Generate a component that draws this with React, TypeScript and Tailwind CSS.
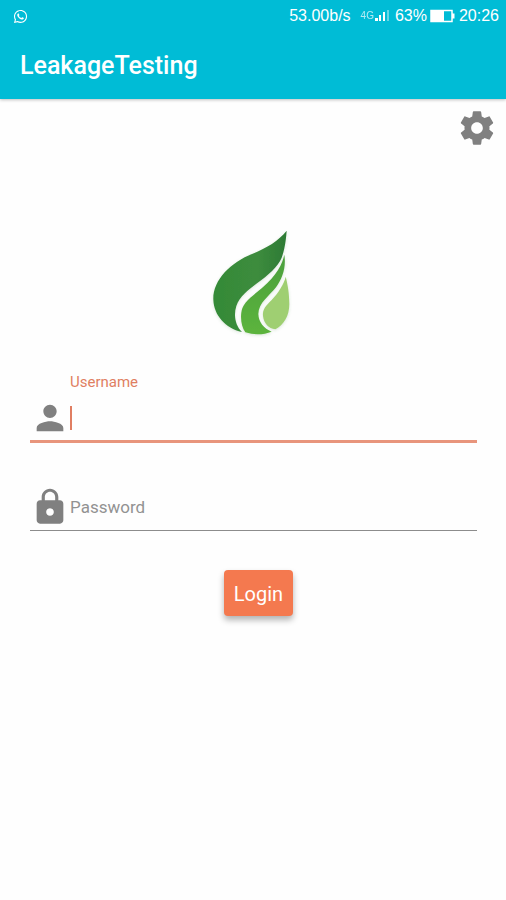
import { FaWhatsapp } from "react-icons/fa";

function StatusBar() {
  return (
    <div className="flex h-8 items-center justify-between pl-[13px] pr-[7px]">
      <FaWhatsapp className="size-[15px]" />
      <div className="flex items-center font-['Liberation_Sans',sans-serif] text-[16px] leading-5">
        <span>53.00b/s</span>
        <span className="ml-[10px] text-[10px] leading-5 opacity-70">4G</span>
        <svg viewBox="0 0 16 12" className="h-3 w-4" fill="currentColor" aria-hidden="true">
          <rect x="1" y="8" width="3" height="3" />
          <rect x="5" y="5" width="2" height="6" />
          <rect x="9" y="2" width="2" height="9" />
          <rect x="13" y="0" width="2" height="11" opacity="0.4" />
        </svg>
        <span className="ml-[5px]">63%</span>
        <svg viewBox="0 0 26 14" className="ml-[3px] h-[14px] w-[26px]" aria-hidden="true">
          <rect x="1" y="1.5" width="21" height="11" fill="none" stroke="currentColor" strokeWidth="1.5" />
          <rect x="1" y="1.5" width="13" height="11" fill="currentColor" />
          <rect x="22" y="4.5" width="2.5" height="5" fill="currentColor" />
        </svg>
        <span className="ml-[3px]">20:26</span>
      </div>
    </div>
  );
}

function LeafLogo() {
  return (
    <svg viewBox="0 0 360 390" className="h-[130px] w-[120px]" role="img" aria-label="Leaf">
      <defs>
        <linearGradient id="dark" x1="0" y1="0" x2="1" y2="0">
          <stop offset="0" stopColor="#348a37" />
          <stop offset="0.6" stopColor="#3d8c3d" />
          <stop offset="1" stopColor="#2d7a35" />
        </linearGradient>
        <linearGradient id="mid" x1="0" y1="0" x2="0" y2="1">
          <stop offset="0" stopColor="#4b9f3c" />
          <stop offset="1" stopColor="#5cb43c" />
        </linearGradient>
        <filter id="soft" x="-20%" y="-20%" width="140%" height="140%">
          <feDropShadow dx="0" dy="3" stdDeviation="5" floodColor="#3f7f3f" floodOpacity="0.2" />
        </filter>
      </defs>
      <g filter="url(#soft)">
        <path
          fill="url(#dark)"
          d="M275 32C250 63 216 83 173 101C106 127 53 181 55 239C57 286 91 324 141 336C121 318 115 285 124 258C134 230 160 209 186 190C220 165 248 141 260 113C268 93 273 60 275 32Z"
        />
        <path
          fill="url(#mid)"
          d="M268 104C262 132 246 165 201 204C177 225 151 241 142 265C134 290 139 321 151 337C178 346 207 344 230 335C206 325 191 307 190 282C191 248 222 229 243 202C262 176 274 143 268 104Z"
        />
        <path
          fill="#9fcf72"
          d="M272 170C268 190 250 219 230 240C213 257 202 268 204 288C207 311 221 325 241 328C266 315 283 288 283 252C283 221 278 192 272 170Z"
        />
      </g>
    </svg>
  );
}

function PersonIcon() {
  return (
    <svg viewBox="0 0 24 24" className="size-10 shrink-0" fill="currentColor" aria-hidden="true">
      <path d="M12 12c2.21 0 4-1.79 4-4s-1.79-4-4-4-4 1.79-4 4 1.79 4 4 4zm0 2c-2.67 0-8 1.34-8 4v2h16v-2c0-2.66-5.33-4-8-4z" />
    </svg>
  );
}

function LockIcon() {
  return (
    <svg viewBox="0 0 24 24" className="size-10 shrink-0" fill="currentColor" aria-hidden="true">
      <path d="M18 8h-1V6c0-2.76-2.24-5-5-5S7 3.24 7 6v2H6c-1.1 0-2 .9-2 2v10c0 1.1.9 2 2 2h12c1.1 0 2-.9 2-2V10c0-1.1-.9-2-2-2zm-6 9.3c-1.27 0-2.3-1.03-2.3-2.3s1.03-2.3 2.3-2.3 2.3 1.03 2.3 2.3-1.03 2.3-2.3 2.3zm3.1-9.3H8.9V6c0-1.71 1.39-3.1 3.1-3.1s3.1 1.39 3.1 3.1v2z" />
    </svg>
  );
}

function GearIcon() {
  return (
    <svg viewBox="0 0 24 24" className="size-10" fill="currentColor" aria-hidden="true">
      <path d="M19.43 12.98c.04-.32.07-.64.07-.98s-.03-.66-.07-.98l2.11-1.65c.19-.15.24-.42.12-.64l-2-3.46c-.12-.22-.39-.3-.61-.22l-2.49 1c-.52-.4-1.08-.73-1.69-.98l-.38-2.65C14.46 2.18 14.25 2 14 2h-4c-.25 0-.46.18-.49.42l-.38 2.65c-.61.25-1.17.59-1.69.98l-2.49-1c-.23-.09-.49 0-.61.22l-2 3.46c-.13.22-.07.49.12.64l2.11 1.65c-.04.32-.07.65-.07.98s.03.66.07.98l-2.11 1.65c-.19.15-.24.42-.12.64l2 3.46c.12.22.39.3.61.22l2.49-1c.52.4 1.08.73 1.69.98l.38 2.65c.03.24.24.42.49.42h4c.25 0 .46-.18.49-.42l.38-2.65c.61-.25 1.17-.59 1.69-.98l2.49 1c.23.09.49 0 .61-.22l2-3.46c.12-.22.07-.49-.12-.64l-2.11-1.65zM12 15.5c-1.93 0-3.5-1.57-3.5-3.5s1.57-3.5 3.5-3.5 3.5 1.57 3.5 3.5-1.57 3.5-3.5 3.5z" />
    </svg>
  );
}

export default function App() {
  return (
    <div className="min-h-screen bg-[#fefefe] font-['Roboto',sans-serif] text-[#808080]">
      <header className="bg-[#00bcd6] text-white shadow-[0_1px_3px_rgba(0,0,0,0.25)]">
        <StatusBar />
        <h1 className="px-5 pt-[22px] pb-[21px] text-[25px] leading-6 font-medium">LeakageTesting</h1>
      </header>

      <main>
        <div className="flex justify-end px-[9px] pt-[9px]">
          <button type="button" aria-label="Settings">
            <GearIcon />
          </button>
        </div>

        <div className="mt-[72px] flex justify-center pl-1">
          <LeafLogo />
        </div>

        <form className="mt-[22px] pr-[29px] pl-[30px]" onSubmit={(e) => e.preventDefault()}>
          <label htmlFor="username" className="block pl-10 text-[15px] leading-5 text-[#e07e62]">
            Username
          </label>
          <div className="flex h-[51px] items-center border-b-3 border-[#e8957c] pt-2 pb-1">
            <PersonIcon />
            <span className="h-6 w-[2px] bg-[#e07e62]" />
            <input id="username" type="text" className="h-8 min-w-0 flex-1 text-[17px] outline-none" />
          </div>

          <div className="mt-11 flex h-11 items-center border-b border-[#8c8c8c] pb-1">
            <LockIcon />
            <input
              type="password"
              aria-label="Password"
              placeholder="Password"
              className="h-8 min-w-0 flex-1 text-[17px] outline-none placeholder:text-[#929292]"
            />
          </div>

          <div className="mt-[39px] flex justify-center pl-[10px]">
            <button
              type="submit"
              className="rounded bg-[#f4794f] px-[10px] pt-3 pb-[10px] text-[20px] leading-6 text-white shadow-[0_4px_6px_rgba(0,0,0,0.3)]"
            >
              Login
            </button>
          </div>
        </form>
      </main>
    </div>
  );
}
